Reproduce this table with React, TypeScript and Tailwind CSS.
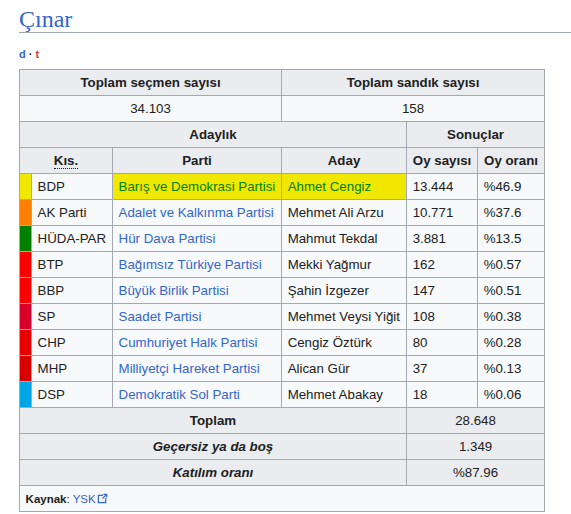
import React from 'react';

interface Row {
  short: string;
  party: string;
  candidate: string;
  votes: string;
  pct: string;
  color: string;
  highlight?: boolean;
}

const rows: Row[] = [
  { short: 'BDP', party: 'Barış ve Demokrasi Partisi', candidate: 'Ahmet Cengiz', votes: '13.444', pct: '%46.9', color: '#f0e800', highlight: true },
  { short: 'AK Parti', party: 'Adalet ve Kalkınma Partisi', candidate: 'Mehmet Ali Arzu', votes: '10.771', pct: '%37.6', color: '#ff8000' },
  { short: 'HÜDA-PAR', party: 'Hür Dava Partisi', candidate: 'Mahmut Tekdal', votes: '3.881', pct: '%13.5', color: '#008000' },
  { short: 'BTP', party: 'Bağımsız Türkiye Partisi', candidate: 'Mekki Yağmur', votes: '162', pct: '%0.57', color: '#ff0000' },
  { short: 'BBP', party: 'Büyük Birlik Partisi', candidate: 'Şahin İzgezer', votes: '147', pct: '%0.51', color: '#ff0000' },
  { short: 'SP', party: 'Saadet Partisi', candidate: 'Mehmet Veysi Yiğit', votes: '108', pct: '%0.38', color: '#d8002a' },
  { short: 'CHP', party: 'Cumhuriyet Halk Partisi', candidate: 'Cengiz Öztürk', votes: '80', pct: '%0.28', color: '#e80000' },
  { short: 'MHP', party: 'Milliyetçi Hareket Partisi', candidate: 'Alican Gür', votes: '37', pct: '%0.13', color: '#d80000' },
  { short: 'DSP', party: 'Demokratik Sol Parti', candidate: 'Mehmet Abakay', votes: '18', pct: '%0.06', color: '#00a6e4' },
];

const th = 'border border-[#a2a9b1] bg-[#eaecf0] h-[26px] px-[5.6px] py-0 text-center font-bold';
const td = 'border border-[#a2a9b1] bg-[#f8f9fa] h-[26px] px-[5.6px] py-0 text-left';

const ExternalIcon = () => (
  <svg width="11" height="11" viewBox="0 0 12 12" className="inline-block ml-[1px] align-[-1px]" fill="none" stroke="#3366cc" strokeWidth="1.3">
    <path d="M6.5 2.5H1.5V10.5H9.5V5.5" />
    <path d="M6 6L10.5 1.5M7 1.5H10.5V5" />
  </svg>
);

export default function App() {
  return (
    <div className="min-h-[514px] bg-white pl-[19px] text-[#202122] font-['Liberation_Sans',Arial,sans-serif]">
      <h2 className="pt-[6px] leading-[26px] border-b border-[#a2a9b1] text-[24px] text-[#3366cc] font-['Liberation_Serif','Times_New_Roman',serif]">
        Çınar
      </h2>
      <div className="mt-[14px] text-[11px] leading-[14px] font-bold">
        <span className="text-[#3366cc]">d</span>
        <span className="mx-[3px] text-[#202122]">·</span>
        <span className="text-[#dd3333]">t</span>
      </div>
      <table className="mt-[8px] table-fixed border-collapse w-[526px] text-[13.3px] leading-[20px]">
        <colgroup>
          <col className="w-[12px]" />
          <col className="w-[81px]" />
          <col className="w-[169px]" />
          <col className="w-[125px]" />
          <col className="w-[71px]" />
          <col className="w-[67px]" />
        </colgroup>
        <tbody>
          <tr>
            <th colSpan={3} className={th}>Toplam seçmen sayısı</th>
            <th colSpan={3} className={th}>Toplam sandık sayısı</th>
          </tr>
          <tr>
            <td colSpan={3} className={`${td} !text-center`}>34.103</td>
            <td colSpan={3} className={`${td} !text-center`}>158</td>
          </tr>
          <tr>
            <th colSpan={4} className={th}>Adaylık</th>
            <th colSpan={2} className={th}>Sonuçlar</th>
          </tr>
          <tr>
            <th colSpan={2} className={th}>
              <abbr className="no-underline border-b border-dotted border-[#202122]">Kıs.</abbr>
            </th>
            <th className={th}>Parti</th>
            <th className={th}>Aday</th>
            <th className={`${th} whitespace-nowrap`}>Oy sayısı</th>
            <th className={`${th} whitespace-nowrap`}>Oy oranı</th>
          </tr>
          {rows.map((r) => (
            <tr key={r.short}>
              <td className="border border-[#a2a9b1] p-0 h-[26px]" style={{ backgroundColor: r.color }} />
              <td className={`${td} whitespace-nowrap`}>{r.short}</td>
              <td
                className={`${td} whitespace-nowrap ${r.highlight ? '!bg-[#f0e800] text-[#008000]' : 'text-[#3366cc]'}`}
              >
                {r.party}
              </td>
              <td
                className={`${td} whitespace-nowrap ${r.highlight ? '!bg-[#f0e800] text-[#008000]' : ''}`}
              >
                {r.candidate}
              </td>
              <td className={td}>{r.votes}</td>
              <td className={td}>{r.pct}</td>
            </tr>
          ))}
          <tr>
            <th colSpan={4} className={th}>Toplam</th>
            <td colSpan={2} className={`${th} !font-normal`}>28.648</td>
          </tr>
          <tr>
            <th colSpan={4} className={`${th} italic`}>Geçersiz ya da boş</th>
            <td colSpan={2} className={`${th} !font-normal`}>1.349</td>
          </tr>
          <tr>
            <th colSpan={4} className={`${th} italic`}>Katılım oranı</th>
            <td colSpan={2} className={`${th} !font-normal`}>%87.96</td>
          </tr>
          <tr>
            <td colSpan={6} className={`${td} text-[11.5px]`}>
              <span className="font-bold">Kaynak</span>: <span className="text-[#3366cc]">YSK</span>
              <ExternalIcon />
            </td>
          </tr>
        </tbody>
      </table>
    </div>
  );
}
